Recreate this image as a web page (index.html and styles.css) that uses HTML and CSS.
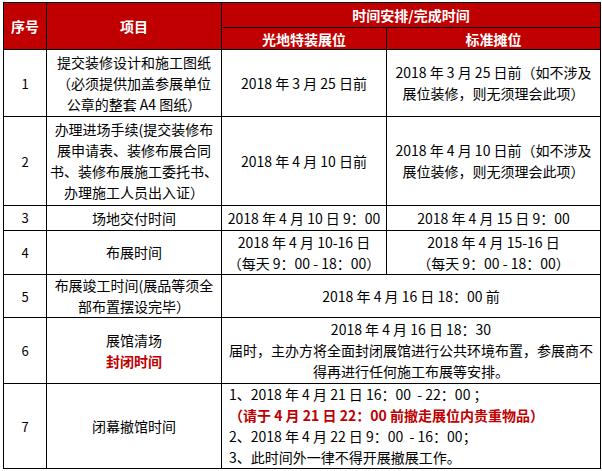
FILE: index.html
```html
<!DOCTYPE html>
<html lang="zh-CN">
<head>
<meta charset="utf-8">
<title>时间安排</title>
<link rel="stylesheet" href="styles.css">
</head>
<body>
<table class="schedule">
  <colgroup>
    <col class="c-no">
    <col class="c-item">
    <col class="c-a">
    <col class="c-b">
  </colgroup>
  <thead>
    <tr class="h1">
      <th rowspan="2">序号</th>
      <th rowspan="2">项目</th>
      <th colspan="2">时间安排/完成时间</th>
    </tr>
    <tr class="h2">
      <th>光地特装展位</th>
      <th>标准摊位</th>
    </tr>
  </thead>
  <tbody>
    <tr class="r1">
      <td class="no">1</td>
      <td>提交装修设计和施工图纸<br>（必须提供加盖参展单位<br>公章的整套 A4 图纸）</td>
      <td>2018 年 3 月 25 日前</td>
      <td>2018 年 3 月 25 日前（如不涉及<br>展位装修，则无须理会此项）</td>
    </tr>
    <tr class="r2">
      <td class="no">2</td>
      <td>办理进场手续(提交装修布<br>展申请表、装修布展合同<br>书、装修布展施工委托书、<br>办理施工人员出入证）</td>
      <td>2018 年 4 月 10 日前</td>
      <td>2018 年 4 月 10 日前（如不涉及<br>展位装修，则无须理会此项）</td>
    </tr>
    <tr class="r3">
      <td class="no">3</td>
      <td>场地交付时间</td>
      <td>2018 年 4 月 10 日 9：00</td>
      <td>2018 年 4 月 15 日 9：00</td>
    </tr>
    <tr class="r4">
      <td class="no">4</td>
      <td>布展时间</td>
      <td>2018 年 4 月 10-16 日<br>（每天 9：00 - 18：00）</td>
      <td>2018 年 4 月 15-16 日<br>（每天 9：00 - 18：00）</td>
    </tr>
    <tr class="r5">
      <td class="no">5</td>
      <td>布展竣工时间(展品等须全<br>部布置摆设完毕）</td>
      <td colspan="2">2018 年 4 月 16 日 18：00 前</td>
    </tr>
    <tr class="r6">
      <td class="no">6</td>
      <td>展馆清场<br><span class="red">封闭时间</span></td>
      <td colspan="2" class="notice">2018 年 4 月 16 日 18：30<br>届时，主办方将全面封闭展馆进行公共环境布置，参展商不<br>得再进行任何施工布展等安排。</td>
    </tr>
    <tr class="r7">
      <td class="no">7</td>
      <td>闭幕撤馆时间</td>
      <td colspan="2" class="list">1、2018 年 4 月 21 日 16：00 &nbsp;- 22：00 ；<br><span class="red">（请于 4 月 21 日 22：00 前撤走展位内贵重物品）</span><br>2、2018 年 4 月 22 日 9：00 &nbsp;- 16：00；<br>3、此时间外一律不得开展撤展工作。</td>
    </tr>
  </tbody>
</table>
</body>
</html>
```

FILE: styles.css
```css
html, body {
  margin: 0;
  padding: 0;
  background: #ffffff;
}

body {
  padding: 2px 0 0 3px;
  font-family: "Noto Sans CJK SC", "Noto Sans", sans-serif;
  font-size: 14px;
  color: #000000;
}

.schedule {
  border-collapse: collapse;
  table-layout: fixed;
  width: 597px;
}

.c-no { width: 43px; }
.c-item { width: 175px; }
.c-a { width: 165px; }
.c-b { width: 214px; }

.schedule th,
.schedule td {
  border: 1px solid #000000;
  padding: 0 3px;
  text-align: center;
  vertical-align: middle;
}

.schedule th {
  background: #c00000;
  color: #ffffff;
  font-weight: 700;
  font-size: 14px;
  line-height: 18px;
}

.schedule td {
  line-height: 21px;
}

.h1 { height: 25px; }
.h2 { height: 22px; }
.r1 { height: 67px; }
.r2 { height: 89px; }
.r3 { height: 25px; }
.r4 { height: 44px; }
.r5 { height: 43px; }
.r6 { height: 66px; }
.r7 { height: 83px; }

.r3 td { line-height: 18px; }

.no {
  font-size: 13px;
}

.red {
  color: #c00000;
  font-weight: 700;
}

.notice {
  line-height: 22px;
}

.schedule td.list {
  text-align: left;
  padding-left: 7px;
}
```
